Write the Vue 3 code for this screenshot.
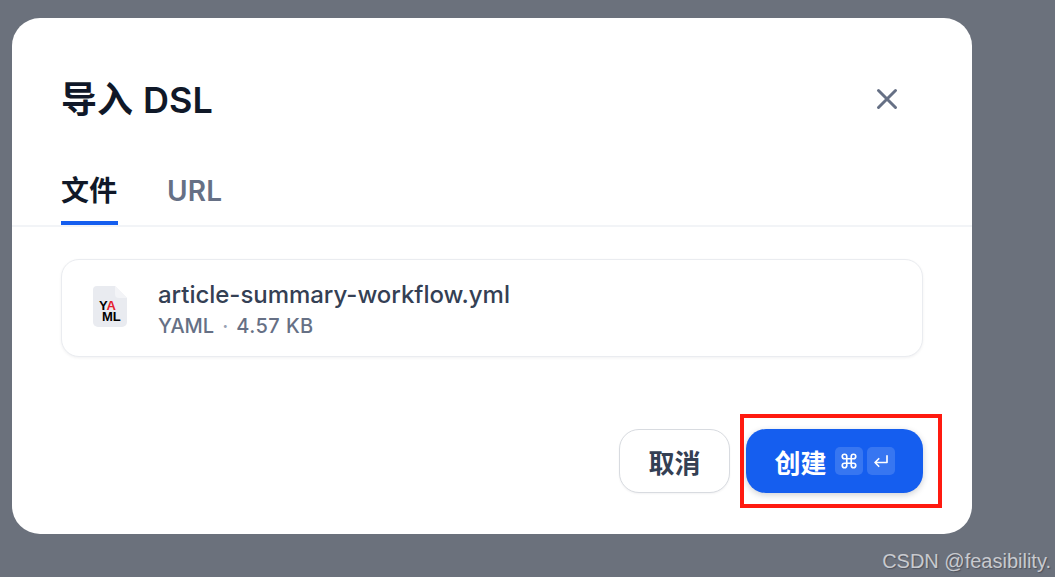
<template>
  <div class="page">
    <section class="modal">
      <header class="head">
        <h1 class="title">导入 DSL</h1>
        <svg class="close" width="24" height="24" viewBox="0 0 24 24" aria-label="关闭">
          <path d="M3.5 3.5 L20.5 20.5 M20.5 3.5 L3.5 20.5" stroke="#667085" stroke-width="3" stroke-linecap="round" fill="none" />
        </svg>
      </header>
      <nav class="tabs">
        <div class="tab active">文件</div>
        <div class="tab">URL</div>
      </nav>
      <div class="body">
        <div class="file">
          <svg class="file-icon" width="36" height="44" viewBox="0 0 36 44">
            <path d="M5 1 H23 L35 13 V37 a5 5 0 0 1 -5 5 H6 a5 5 0 0 1 -5 -5 V5 a4 4 0 0 1 4 -4 Z" fill="#e9ebf0" />
            <path d="M23 1 L35 13 H27 a4 4 0 0 1 -4 -4 Z" fill="#f3f4f7" />
            <text x="7" y="25" class="yaml">Y<tspan fill="#e5202e">A</tspan></text>
            <text x="10" y="36" class="yaml">ML</text>
          </svg>
          <div class="file-text">
            <div class="file-name">article-summary-workflow.yml</div>
            <div class="file-meta">YAML<span class="dot">·</span><span class="size">4.57 KB</span></div>
          </div>
        </div>
      </div>
      <footer class="foot">
        <button class="btn cancel">取消</button>
        <button class="btn create">
          <span>创建</span>
          <span class="keys">
            <span class="key">
              <svg width="18" height="18" viewBox="0 0 24 24" fill="none" stroke="#fff" stroke-width="2.2">
                <path d="M9 9 H15 V15 H9 Z M9 9 V6 a3 3 0 1 0 -3 3 H9 M15 9 H18 a3 3 0 1 0 -3 -3 V9 M15 15 V18 a3 3 0 1 0 3 -3 H15 M9 15 H6 a3 3 0 1 0 3 3 V15" />
              </svg>
            </span>
            <span class="key">
              <svg width="18" height="18" viewBox="0 0 24 24" fill="none" stroke="#fff" stroke-width="2.2" stroke-linecap="round" stroke-linejoin="round">
                <path d="M20 5 V14 H4 M9 9 L4 14 L9 19" />
              </svg>
            </span>
          </span>
        </button>
      </footer>
    </section>
    <div class="mark"></div>
    <div class="watermark">CSDN @feasibility.</div>
  </div>
</template>

<script setup>
</script>

<style>
html, body { margin: 0; background: #fff; overflow: hidden; }
</style>

<style scoped>
.page {
  position: relative;
  box-sizing: border-box;
  width: 1055px;
  height: 577px;
  padding: 18px 12px;
  background: #6b717c;
  font-family: Inter, "Noto Sans CJK SC", sans-serif;
  overflow: hidden;
}
.modal {
  box-sizing: border-box;
  width: 960px;
  height: 516px;
  display: flex;
  flex-direction: column;
  background: #fff;
  border-radius: 28px;
}
.head {
  display: flex;
  align-items: center;
  justify-content: space-between;
  height: 44px;
  margin-top: 60px;
  padding: 0 73px 0 49px;
}
.title {
  margin: 0;
  font-size: 36px;
  line-height: 44px;
  font-weight: 600;
  word-spacing: 1px;
  color: #101828;
}
.close { display: block; margin-top: -3px; }
.tabs {
  display: flex;
  gap: 49px;
  margin-top: 44px;
  padding: 0 49px;
  border-bottom: 2px solid #f2f4f7;
}
.tab {
  height: 59px;
  box-sizing: border-box;
  padding-top: 5px;
  font-size: 28px;
  line-height: 40px;
  font-weight: 600;
  letter-spacing: 0.2px;
  color: #667085;
}
.tab.active {
  width: 57px;
  color: #101828;
  border-bottom: 4px solid #155eef;
}
.body { padding: 32px 49px 0; }
.file {
  box-sizing: border-box;
  height: 98px;
  display: flex;
  align-items: center;
  gap: 30px;
  padding: 0 30px;
  background: #fff;
  border: 1px solid #eaecf0;
  border-radius: 18px;
  box-shadow: 0 1px 3px rgba(16, 24, 40, 0.06);
}
.file-icon { display: block; flex: none; margin-top: -2px; }
.yaml {
  font-family: "Liberation Sans", sans-serif;
  font-size: 13px;
  font-weight: 700;
  fill: #000;
}
.file-text { padding-top: 3px; }
.file-name {
  font-size: 24px;
  line-height: 32px;
  font-weight: 500;
  letter-spacing: -0.03px;
  color: #344054;
}
.file-meta {
  margin-top: 1px;
  font-size: 20px;
  line-height: 28px;
  font-weight: 500;
  color: #667085;
}
.dot { margin: 0 8px; color: #98a2b3; }
.size { letter-spacing: 0.45px; }
.foot {
  display: flex;
  justify-content: flex-end;
  gap: 16px;
  margin-top: 72px;
  padding: 0 49px;
}
.btn {
  box-sizing: border-box;
  height: 64px;
  display: flex;
  align-items: center;
  justify-content: center;
  border-radius: 20px;
  font-family: inherit;
  font-size: 26px;
  font-weight: 600;
}
.cancel {
  width: 111px;
  padding: 0;
  background: #fff;
  color: #344054;
  border: 1px solid #d8dbe0;
  box-shadow: 0 1px 2px rgba(16, 24, 40, 0.05);
}
.create {
  width: 177px;
  padding: 0;
  gap: 8px;
  background: #155eef;
  color: #fff;
  border: 0;
  box-shadow: 0 2px 6px rgba(16, 24, 40, 0.2);
}
.keys { display: flex; gap: 4px; }
.key {
  width: 28px;
  height: 28px;
  display: flex;
  align-items: center;
  justify-content: center;
  border-radius: 5px;
  background: rgba(255, 255, 255, 0.15);
}
.mark {
  position: absolute;
  left: 740px;
  top: 414px;
  width: 202px;
  height: 94px;
  box-sizing: border-box;
  border: 4px solid #ff1a10;
}
.watermark {
  position: absolute;
  right: 4px;
  bottom: 4px;
  font-family: "Liberation Sans", sans-serif;
  font-size: 20px;
  line-height: 24px;
  color: #c8cacf;
  text-shadow: 1px 1px 1px rgba(50, 50, 60, 0.5);
}
</style>
